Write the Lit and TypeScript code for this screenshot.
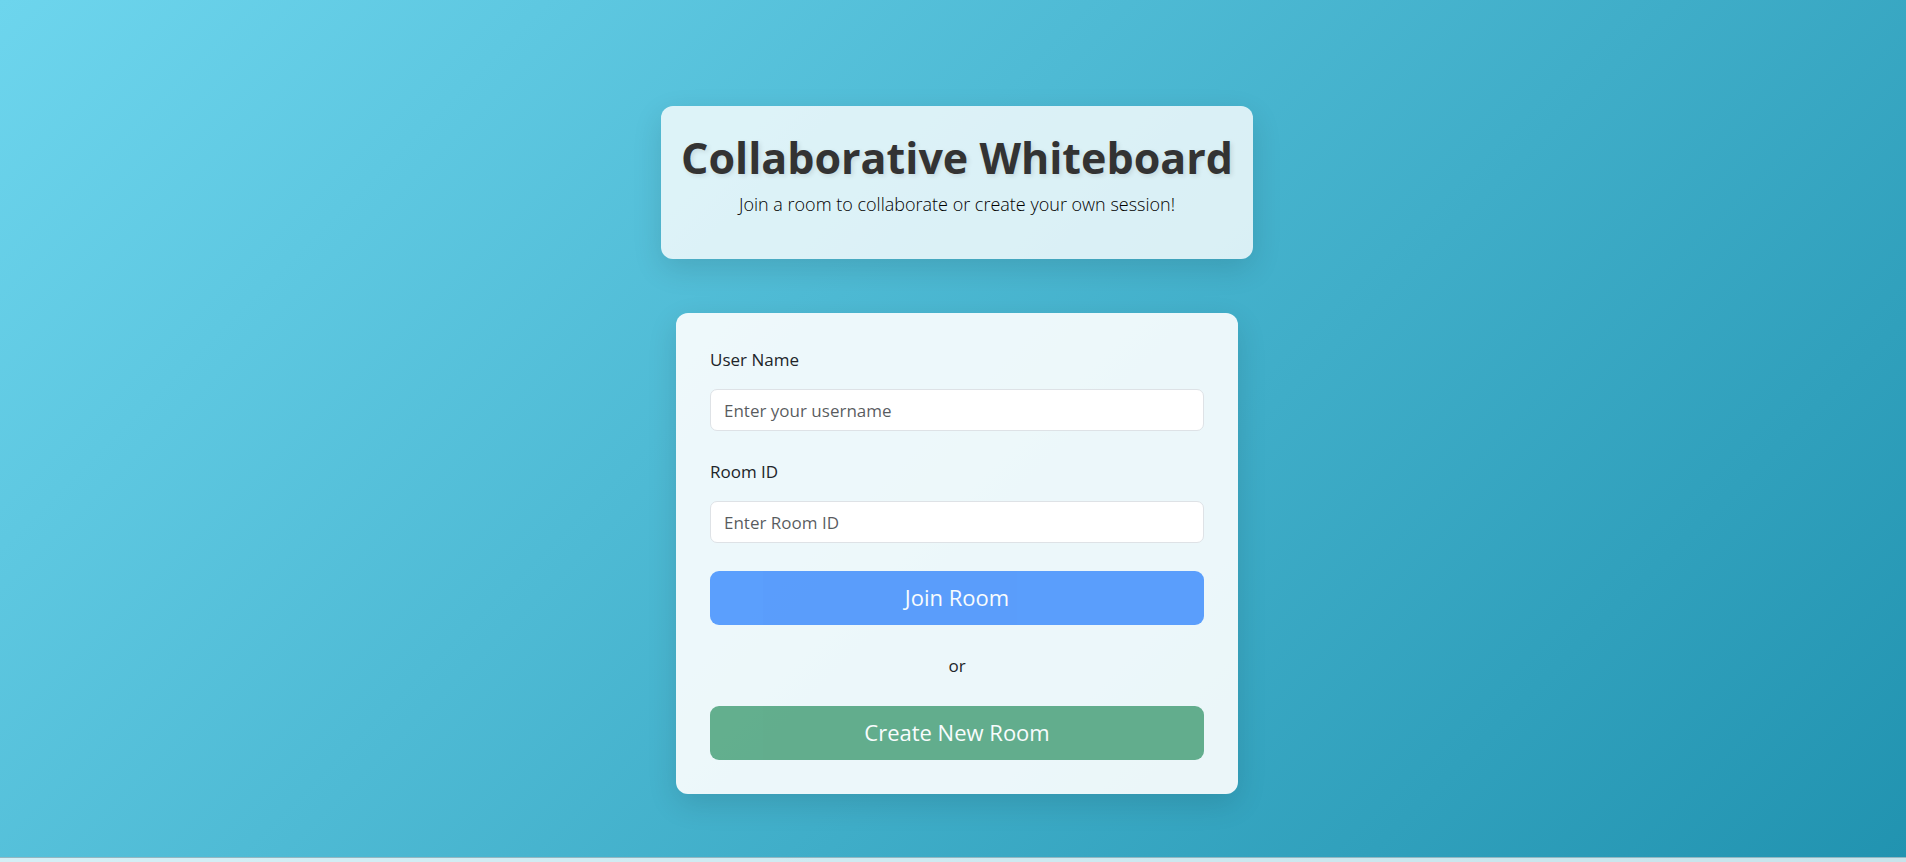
import { LitElement, html, css } from "lit";
import { customElement, state } from "lit/decorators.js";

@customElement("room-form")
export class RoomForm extends LitElement {
  static styles = css`
    :host {
      display: block;
      width: 100%;
      max-width: 562px;
    }
    .card {
      box-sizing: border-box;
      padding: 34px;
      border-radius: 12px;
      background: rgba(255, 255, 255, 0.9);
      box-shadow: 0 10px 30px rgba(0, 0, 0, 0.12);
    }
    .field {
      display: flex;
      flex-direction: column;
      gap: 16px;
      margin-bottom: 28px;
    }
    label {
      line-height: 26px;
      color: #212529;
    }
    input {
      box-sizing: border-box;
      width: 100%;
      height: 42px;
      padding: 0 13px;
      border: 1px solid #dee2e6;
      border-radius: 7px;
      background: #fff;
      color: #212529;
      font: inherit;
      outline: none;
    }
    input:focus {
      border-color: #86b7fe;
    }
    input::placeholder {
      color: rgba(33, 37, 41, 0.75);
      opacity: 1;
    }
    button {
      display: block;
      width: 100%;
      height: 54px;
      padding: 0 16px 2px;
      border: 0;
      border-radius: 9px;
      color: #fff;
      font: inherit;
      font-size: 22px;
      cursor: pointer;
    }
    button:disabled {
      opacity: 0.65;
      cursor: default;
    }
    .join {
      background: #0d6efd;
    }
    .create {
      background: #198754;
    }
    .or {
      margin: 28px 0;
      line-height: 25px;
      text-align: center;
      color: #212529;
    }
  `;

  @state() private userName = "";
  @state() private roomId = "";

  render() {
    return html`
      <form class="card" @submit=${(e: Event) => e.preventDefault()}>
        <div class="field">
          <label for="user">User Name</label>
          <input
            id="user"
            type="text"
            placeholder="Enter your username"
            .value=${this.userName}
            @input=${(e: Event) => (this.userName = (e.target as HTMLInputElement).value)}
          />
        </div>
        <div class="field">
          <label for="room">Room ID</label>
          <input
            id="room"
            type="text"
            placeholder="Enter Room ID"
            .value=${this.roomId}
            @input=${(e: Event) => (this.roomId = (e.target as HTMLInputElement).value)}
          />
        </div>
        <button class="join" type="submit" ?disabled=${!this.userName || !this.roomId}>Join Room</button>
        <p class="or">or</p>
        <button class="create" type="button" ?disabled=${!this.userName}>Create New Room</button>
      </form>
    `;
  }
}

@customElement("app-root")
export class AppRoot extends LitElement {
  static styles = css`
    :host {
      display: flex;
      flex-direction: column;
      min-height: 100vh;
      background: linear-gradient(135deg, #6dd5ed, #2193b0);
      color: #212529;
      font-family: "Segoe UI", "Open Sans", "Noto Sans", sans-serif;
      font-size: 17px;
    }
    main {
      flex: 1;
      display: flex;
      flex-direction: column;
      align-items: center;
      gap: 54px;
      box-sizing: border-box;
      padding: 106px 16px 48px 24px;
    }
    header {
      box-sizing: border-box;
      padding: 22px 20px 41px;
      border-radius: 12px;
      background: rgba(255, 255, 255, 0.8);
      box-shadow: 0 10px 30px rgba(0, 0, 0, 0.12);
      text-align: center;
    }
    h1 {
      margin: 0;
      font-size: 43px;
      font-weight: 700;
      line-height: 60px;
      color: #333;
      text-shadow: 2px 2px 5px rgba(0, 0, 0, 0.1);
    }
    .lead {
      margin: 2px 0 0;
      font-size: 18px;
      font-weight: 300;
      line-height: 28px;
      color: #000;
    }
    footer {
      height: 4px;
      border-top: 1px solid #92b7c2;
      background: rgba(255, 255, 255, 0.75);
    }
  `;

  render() {
    return html`
      <main>
        <header>
          <h1>Collaborative Whiteboard</h1>
          <p class="lead">Join a room to collaborate or create your own session!</p>
        </header>
        <room-form></room-form>
      </main>
      <footer></footer>
    `;
  }
}
